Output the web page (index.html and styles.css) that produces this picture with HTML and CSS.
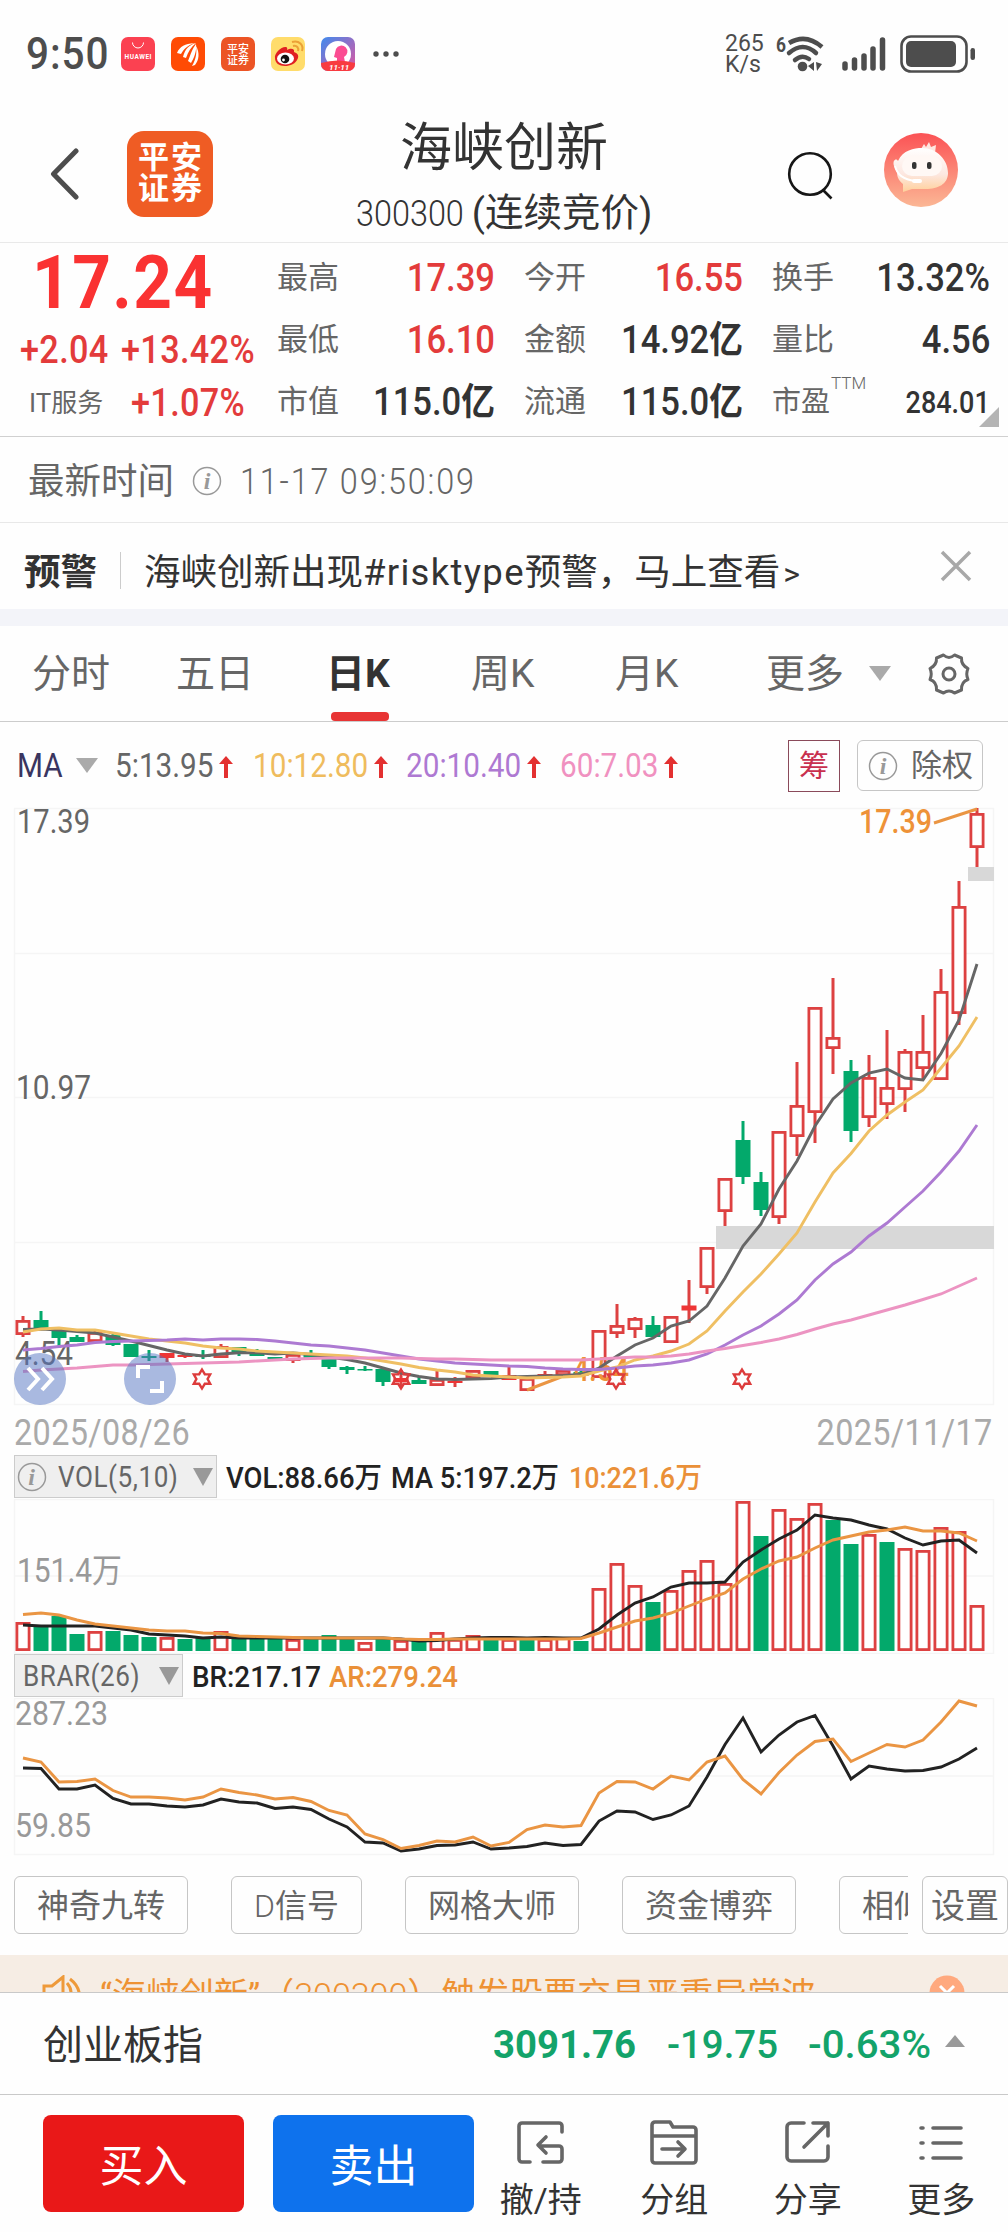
FILE: index.html
```html
<!DOCTYPE html>
<html lang="zh-CN">
<head>
  <meta charset="UTF-8">
  <meta name="viewport" content="width=device-width, initial-scale=1.0">
  <title>海峡创新 300300</title>
  <link rel="stylesheet" href="styles.css">
</head>
<body>
  <!-- 状态栏 -->
  <div class="status-bar">
    <span class="clock din">9:50</span>
    <div class="app-icons">
      <svg class="app-icon" viewBox="0 0 34 34">
        <rect width="34" height="34" rx="7" fill="#fb4151"/>
        <path d="M11.500 5.500a5.500 5.500 0 0 0 11 0" fill="none" stroke="#fff" stroke-width="1"/>
        <text x="3.500" y="22" textLength="27" font-size="6.500" font-weight="bold" fill="#fff">HUAWEI</text>
      </svg>
      <svg class="app-icon" viewBox="0 0 34 34">
        <rect width="34" height="34" rx="7" fill="#ff4b05"/>
        <path d="M6 16C9 9 14 7 23 6C16 9 13 12 10 17ZM12 20C14 12 18 8 25 6C20 10 17 15 15 21ZM17 24C20 17 21 12 25 7C26 14 23 21 20 26ZM21 29C25 22 26 16 25 9C29 16 28 23 24 28Z" fill="#fff"/>
      </svg>
      <svg class="app-icon" viewBox="0 0 34 34">
        <rect width="34" height="34" rx="7" fill="#ec5425"/>
        <text x="6" y="15.500" font-size="11" font-weight="500" fill="#fff">平安</text>
        <text x="6" y="26.500" font-size="11" font-weight="500" fill="#fff">证券</text>
      </svg>
      <svg class="app-icon" viewBox="0 0 34 34">
        <rect width="34" height="34" rx="7" fill="#ffdc6b"/>
        <path d="M4 21C3 16 11 9 15 10C17 10.500 16 13 16 13C19 11 24 11 23 15C26 16 28 18 27 21C25 27 19 29 14 29C8 29 4 26 4 21Z" fill="#e01f22"/>
        <ellipse cx="14.500" cy="21.500" rx="8.500" ry="6" fill="#fff"/>
        <circle cx="14" cy="22" r="4.300" fill="#111"/>
        <circle cx="12.500" cy="23" r="1.400" fill="#fff"/>
        <path d="M22 9c4-1 6 2 5 5M21 5c7-2 12 3 10 9" fill="none" stroke="#eba136" stroke-width="2"/>
      </svg>
      <svg class="app-icon" viewBox="0 0 34 34">
        <defs>
          <linearGradient id="shopBg" x1="0" y1="0" x2="1" y2="1">
            <stop offset="0" stop-color="#3f8bee"/><stop offset="1" stop-color="#e2559f"/>
          </linearGradient>
        </defs>
        <rect width="34" height="34" rx="7" fill="url(#shopBg)"/>
        <circle cx="17" cy="17" r="13" fill="#fff"/>
        <path d="M15 12a6 6 0 1 1 8 8l1 5h-8v-4l-3-1z" fill="#fb4c92"/>
        <path d="M0 26q17-5 34 0v1a7 7 0 0 1-7 7H7a7 7 0 0 1-7-7z" fill="#f83b40"/>
        <text x="8" y="33" font-size="8" font-weight="bold" font-style="italic" fill="#fff">11·11</text>
      </svg>
    </div>
    <svg class="dots" viewBox="0 0 28 8" fill="#4d4d4d"><circle cx="3" cy="4" r="2.700"/><circle cx="13" cy="4" r="2.700"/><circle cx="23" cy="4" r="2.700"/></svg>
    <div class="net-speed"><span>265</span><span>K/s</span></div>
    <svg class="wifi" viewBox="0 0 50 40">
      <text x="0" y="18" font-size="20" font-weight="bold" textLength="10" lengthAdjust="spacingAndGlyphs" fill="#4d4d4d">6</text>
      <g fill="none" stroke="#4d4d4d" stroke-width="4.500">
        <path d="M13 9Q30-1 46 13"/>
        <path d="M13 19Q27 7 40 19" stroke-linecap="round"/>
        <path d="M19 26Q26 20 33 25" stroke-linecap="round"/>
      </g>
      <circle cx="26.500" cy="32.500" r="4.800" fill="#4d4d4d"/>
      <path d="M38 28v9l-6-5zM40 28l6 2-5 7z" fill="#4d4d4d"/>
    </svg>
    <svg class="signal" viewBox="0 0 46 36" stroke="#4d4d4d" stroke-width="5.500" stroke-linecap="round">
      <path d="M3 28v4M12.500 24v8M22 20v12M31 13v19M40.500 4v28"/>
    </svg>
    <svg class="battery" viewBox="0 0 76 38">
      <rect x="1.500" y="1.500" width="65" height="35" rx="9.500" fill="none" stroke="#4d4d4d" stroke-width="2.600"/>
      <rect x="6" y="6" width="50" height="26" rx="5" fill="#4d4d4d"/>
      <rect x="70.500" y="13" width="4.500" height="12" rx="2.200" fill="#4d4d4d"/>
    </svg>
  </div>

  <!-- 标题栏 -->
  <div class="header">
    <div class="header-left">
      <svg class="back" viewBox="0 0 30 52"><path d="M26 3L3.500 26L26 49" fill="none" stroke="#4d4d4d" stroke-width="5" stroke-linecap="round" stroke-linejoin="round"/></svg>
      <div class="logo"><span>平安</span><span>证券</span></div>
    </div>
    <div class="title-box">
      <div class="title">海峡创新</div>
      <div class="subtitle"><span class="din code">300300</span><span>(连续竞价)</span></div>
    </div>
    <div class="header-right">
      <svg class="search" viewBox="0 0 48 50" fill="none" stroke="#161616" stroke-width="2.600"><circle cx="23" cy="23" r="20.800"/><path d="M36 39l8.500 8.500"/></svg>
      <svg class="avatar" viewBox="0 0 76 76">
        <defs>
          <linearGradient id="avBg" x1="0" y1="0" x2="0" y2="1"><stop offset="0" stop-color="#fb5255"/><stop offset="1" stop-color="#fbb795"/></linearGradient>
          <linearGradient id="avFace" x1="0" y1="0" x2="0" y2="1"><stop offset="0" stop-color="#fff"/><stop offset=".6" stop-color="#fde7e0"/><stop offset="1" stop-color="#ffd09a"/></linearGradient>
        </defs>
        <circle cx="38" cy="38" r="37" fill="url(#avBg)"/>
        <path d="M38 17l3-5 2 3 3-5 2 5 5-2-1 8z" fill="#ffe6e0"/>
        <path d="M11 34C9 27 14 26 15 29C20 18 31 16 39 16C54 16 65 28 65 41C65 52 55 57 43 57L29 57L20 60L20 52C15 48 14 44 14 40Z" fill="url(#avFace)"/>
        <rect x="19" y="24" width="40" height="20" rx="10" fill="#fff8f5"/>
        <rect x="29" y="30" width="4.500" height="7" rx="2" fill="#333"/><rect x="44" y="30" width="4.500" height="7" rx="2" fill="#333"/>
        <path d="M12 34q3 13 20 15" fill="none" stroke="#fff" stroke-width="2"/><rect x="29" y="47" width="10" height="4" rx="2" fill="#fff"/>
      </svg>
    </div>
  </div>

  <!-- 行情 -->
  <div class="quote">
    <div class="price-box">
      <div class="price din">17.24</div>
      <div class="change"><span class="din chg">+2.04</span><span class="din">+13.42%</span></div>
      <div class="industry"><span class="ind-name">IT服务</span><span class="din">+1.07%</span></div>
    </div>
    <div class="stats">
      <div class="stat"><span class="label">最高</span><span class="value red">17.39</span></div>
      <div class="stat"><span class="label">今开</span><span class="value red">16.55</span></div>
      <div class="stat"><span class="label">换手</span><span class="value">13.32%</span></div>
      <div class="stat"><span class="label">最低</span><span class="value red">16.10</span></div>
      <div class="stat"><span class="label">金额</span><span class="value">14.92<b>亿</b></span></div>
      <div class="stat"><span class="label">量比</span><span class="value">4.56</span></div>
      <div class="stat"><span class="label">市值</span><span class="value">115.0<b>亿</b></span></div>
      <div class="stat"><span class="label">流通</span><span class="value">115.0<b>亿</b></span></div>
      <div class="stat"><span class="label small">市盈<i class="ttm">TTM</i></span><span class="value small">284.01</span></div>
    </div>
    <span class="corner"></span>
  </div>

  <div class="time-row">
    <span>最新时间</span>
    <svg class="info" viewBox="0 0 30 30"><circle cx="15" cy="15" r="13.500"/><text x="15" y="23">i</text></svg>
    <span class="din time">11-17 09:50:09</span>
  </div>

  <!-- 预警 -->
  <div class="alert">
    <b>预警</b>
    <span class="alert-line"></span>
    <span class="alert-text">海峡创新出现<span class="latin">#risktype</span>预警，马上查看<span class="gt">&gt;</span></span>
    <svg class="close" viewBox="0 0 32 32"><path d="M2 2l28 28M30 2L2 30" stroke="#a8a8a8" stroke-width="3.500"/></svg>
  </div>
  <div class="band"></div>

  <!-- 周期 -->
  <div class="tabs">
    <span>分时</span>
    <span>五日</span>
    <span class="active">日K</span>
    <span>周K</span>
    <span>月K</span>
    <span>更多</span>
    <i class="tri tab-tri"></i>
    <svg class="gear" viewBox="-22 -22 44 44" fill="none" stroke="#666" stroke-width="3" stroke-linejoin="round">
      <path d="M-5.500-19Q0-14 5.500-19L12.500-16Q12-9 19-5.500Q16.500 0 19 5.500Q12 8 12.500 16L5.500 19Q0 15 -5.500 19L-12.500 16Q-12 8 -19 5.500Q-16.500 0 -19-5.500Q-12-9-12.500-16Z"/>
      <circle r="6"/>
    </svg>
  </div>

  <!-- 均线 -->
  <div class="ma-row">
    <span class="ma-name din">MA</span><i class="tri"></i>
    <span class="ma c5"><span class="din">5:13.95</span></span><svg class="up" viewBox="0 0 14 22"><path d="M7 0L14 8H9V22H5V8H0Z"/></svg>
    <span class="ma c10"><span class="din">10:12.80</span></span><svg class="up" viewBox="0 0 14 22"><path d="M7 0L14 8H9V22H5V8H0Z"/></svg>
    <span class="ma c20"><span class="din">20:10.40</span></span><svg class="up" viewBox="0 0 14 22"><path d="M7 0L14 8H9V22H5V8H0Z"/></svg>
    <span class="ma c60"><span class="din">60:7.03</span></span><svg class="up" viewBox="0 0 14 22"><path d="M7 0L14 8H9V22H5V8H0Z"/></svg>
    <span class="chip">筹</span>
    <span class="right-btn"><svg class="info" viewBox="0 0 30 30"><circle cx="15" cy="15" r="13.500"/><text x="15" y="23">i</text></svg>除权</span>
  </div>

  <!-- K线图 -->
  <svg class="chart k-chart" viewBox="0 800 1008 606">
    <g class="grid"><path d="M14 808.500H993.500V1404.500H14.500V808.500M14 953.500H993M14 1097.500H993M14 1242.500H993"/></g>
    <path d="M716 1226H994V1249H716ZM968 867H994V881H968Z" fill="#d8d8d8"/>
    <g class="axis dark">
      <text x="17" y="833" textLength="73" lengthAdjust="spacingAndGlyphs">17.39</text>
      <text x="16" y="1099" textLength="75" lengthAdjust="spacingAndGlyphs">10.97</text>
      <text x="15" y="1365" textLength="58" lengthAdjust="spacingAndGlyphs">4.54</text>
    </g>
    <g id="candles"></g>
    <g class="axis peak">
      <text x="859" y="833" textLength="73" lengthAdjust="spacingAndGlyphs">17.39</text>
      <text x="573" y="1381" textLength="56" lengthAdjust="spacingAndGlyphs">4.54</text>
      <path d="M934 823L977 809M527 1390L561 1377"/>
    </g>
    <g id="maLines"></g>
    <g id="stars"></g>
    <g fill="#5473c2" fill-opacity=".5"><circle cx="40" cy="1379" r="26"/><circle cx="150" cy="1379" r="26"/></g>
    <path d="M28 1368L38 1379L28 1390M42 1368L52 1379L42 1390M138 1378V1367H150M162 1381V1391H150" fill="none" stroke="#fff" stroke-width="4"/>
  </svg>
  <div class="dates"><span class="din">2025/08/26</span><span class="din din-r">2025/11/17</span></div>

  <!-- 成交量 -->
  <div class="ind-row">
    <span class="ind-btn vol-btn"><svg class="info" viewBox="0 0 30 30"><circle cx="15" cy="15" r="13.500"/><text x="15" y="23">i</text></svg><span class="din">VOL(5,10)</span><i class="tri"></i></span>
    <svg class="ind-text" viewBox="0 0 500 44">
      <text x="9" y="33" textLength="156" lengthAdjust="spacingAndGlyphs">VOL:88.66万</text>
      <text x="174" y="33" textLength="168" lengthAdjust="spacingAndGlyphs">MA 5:197.2万</text>
      <text x="352" y="33" textLength="133" lengthAdjust="spacingAndGlyphs" class="org">10:221.6万</text>
    </svg>
  </div>
  <svg class="chart vol-chart" viewBox="0 1499 1008 155">
    <g class="grid"><path d="M14 1499.500H993.500V1653.500H14.500V1499.500M14 1576H993"/></g>
    <g class="axis"><text x="17" y="1582" textLength="105" lengthAdjust="spacingAndGlyphs">151.4万</text></g>
    <g id="volBars"></g>
    <g id="volLines"></g>
  </svg>

  <!-- BRAR -->
  <div class="ind-row">
    <span class="ind-btn brar-btn"><span class="din">BRAR(26)</span><i class="tri"></i></span>
    <svg class="ind-text" viewBox="0 0 500 44">
      <text x="9" y="33" textLength="129" lengthAdjust="spacingAndGlyphs">BR:217.17</text>
      <text x="146" y="33" textLength="129" lengthAdjust="spacingAndGlyphs" class="org">AR:279.24</text>
    </svg>
  </div>
  <svg class="chart brar-chart" viewBox="0 1697 1008 158">
    <g class="grid"><path d="M14 1697.500H993.500V1853.500H14.500V1697.500M14 1775H993"/></g>
    <g class="axis">
      <text x="15" y="1724" textLength="93" lengthAdjust="spacingAndGlyphs">287.23</text>
      <text x="15" y="1836" textLength="76" lengthAdjust="spacingAndGlyphs">59.85</text>
    </g>
    <g id="brarLines"></g>
  </svg>

  <div class="tools">
    <div class="tool-list">
      <span class="tool">神奇九转</span>
      <span class="tool"><span class="d">D</span>信号</span>
      <span class="tool">网格大师</span>
      <span class="tool">资金博弈</span>
      <span class="tool">相似K线</span>
    </div>
    <span class="tool setting">设置</span>
  </div>

  <!-- 公告 -->
  <div class="notice">
    <svg class="speaker" viewBox="0 0 40 36" fill="none" stroke="#ee9a3a" stroke-width="3"><path d="M2 11H10L21 2V34L10 25H2ZM25 8q8 9 0 20M28 4q12 9 9 24"/></svg>
    <span class="notice-text">“海峡创新”（<span class="notice-code">300300</span>）触发股票交易严重异常波</span>
    <svg class="notice-close" viewBox="0 0 36 36"><circle cx="18" cy="18" r="17.500" fill="#ffa97e"/><path d="M11 11L25 25M25 11L11 25" stroke="#fff" stroke-width="3"/></svg>
  </div>

  <!-- 指数 -->
  <div class="index-bar">
    <span class="index-name">创业板指</span>
    <svg class="index-nums" viewBox="0 0 476 60">
      <text x="-1" y="44" class="now" textLength="143" lengthAdjust="spacingAndGlyphs">3091.76</text>
      <text x="173" y="44" textLength="111" lengthAdjust="spacingAndGlyphs">-19.75</text>
      <text x="314" y="44" textLength="123" lengthAdjust="spacingAndGlyphs">-0.63%</text>
      <path d="M451 33L461 21L471 33Z" fill="#999"/>
    </svg>
  </div>

  <div class="bottom-bar">
    <button class="buy">买入</button>
    <button class="sell">卖出</button>
    <div class="menu">
      <div class="menu-item">
        <svg viewBox="0 0 48 48"><path d="M45 12V6a3 3 0 0 0-3-3H5a3 3 0 0 0-3 3V39a3 3 0 0 0 3 3H13M26 42H42a3 3 0 0 0 3-3V29a3 3 0 0 0-3-3H23M29 17L21 25L29 33"/></svg>
        <span>撤/持</span>
      </div>
      <div class="menu-item">
        <svg viewBox="0 0 48 48"><path d="M2 16H46M2 40V5a3 3 0 0 1 3-3H20L23 7H43a3 3 0 0 1 3 3V40a3 3 0 0 1-3 3H5a3 3 0 0 1-3-3M12 29H34M28 22L35 29L28 36"/></svg>
        <span>分组</span>
      </div>
      <div class="menu-item">
        <svg viewBox="0 0 48 48"><path d="M20 3H7a4 4 0 0 0-4 4V37a4 4 0 0 0 4 4H40a4 4 0 0 0 4-4V26M29 3H44V16M44 3L20 27"/></svg>
        <span>分享</span>
      </div>
      <div class="menu-item">
        <svg viewBox="0 0 48 48"><path d="M4 8h2M16 8H44M4 23h2M16 23H44M4 38h2M16 38H44"/></svg>
        <span>更多</span>
      </div>
    </div>
  </div>

  <script src="chart.js"></script>
</body>
</html>
```
FILE: styles.css
```css
* {
    box-sizing: border-box;
}
body {
    margin: 0;
    width: 1008px;
    height: 2232px;
    overflow: hidden;
    background: #fefefe;
    color: #333;
    font-family: Roboto, "Noto Sans CJK SC", sans-serif;
    text-spacing-trim: space-all; /* 全角标点不压缩 */
}
svg {
    display: block;
    flex-shrink: 0;
}
/* 数字压窄一点 */
.din {
    display: inline-block;
    transform: scaleX(0.9);
    transform-origin: left center;
    white-space: nowrap;
}
.din-r {
    transform-origin: right center;
}
.red {
    color: #e33b3b;
}

/* 状态栏 */
.status-bar {
    display: flex;
    align-items: center;
    height: 108px;
    padding-left: 26px;
}
.clock {
    width: 95px;
    font-size: 45px;
    font-weight: 500;
    line-height: 50px;
    color: #4d4d4d;
    letter-spacing: 1px;
}
.app-icons {
    display: flex;
    gap: 16px;
}
.app-icon {
    width: 34px;
    height: 34px;
}
.dots {
    width: 28px;
    margin-left: 18px;
}
.net-speed {
    display: flex;
    flex-direction: column;
    width: 45px;
    margin-left: 324px;
    font-size: 23px;
    line-height: 21px;
    color: #4d4d4d;
}
.wifi {
    width: 50px;
    margin-left: 6px;
}
.signal {
    width: 46px;
    margin-left: 16px;
}
.battery {
    width: 76px;
    margin-left: 12px;
}

/* 标题栏 */
.header {
    display: grid;
    grid-template-columns: 250px 1fr 250px;
    height: 135px;
    border-bottom: 1px solid #e9e9e9;
}
.header-left {
    display: flex;
    padding: 23px 0 0 50px;
}
.back {
    width: 30px;
    height: 52px;
    margin-top: 17px;
}
.logo {
    display: flex;
    flex-direction: column;
    align-items: center;
    justify-content: center;
    width: 86px;
    height: 86px;
    margin-left: 47px;
    border-radius: 17px;
    background: #ef5c24;
    color: #fff;
    font-size: 31px;
    font-weight: 700;
    line-height: 31px;
    letter-spacing: 2px;
    padding: 0 0 3px 2px;
}
.title-box {
    text-align: center;
}
.title {
    margin-top: 11px;
    font-size: 52px;
    line-height: 60px;
}
.subtitle {
    display: flex;
    justify-content: center;
    margin-top: 12px;
    font-size: 38.5px;
    line-height: 44px;
}
.code {
    width: 116px;
    font-size: 36px;
    font-weight: 300;
    padding-top: 1px;
}
.header-right {
    display: flex;
    padding: 24px 0 0 29px;
}
.search {
    width: 48px;
    height: 50px;
    margin-top: 19px;
}
.avatar {
    width: 76px;
    height: 76px;
    margin-left: 48px;
}

/* 行情 */
.quote {
    position: relative;
    display: flex;
    height: 194px;
    border-bottom: 1px solid #d0d0d0;
}
.price-box {
    width: 277px;
    color: #e33b3b;
    font-size: 38px;
    font-weight: 500;
    letter-spacing: 0.4px;
}
.price {
    margin: 1px 0 0 32px;
    color: #fa3232;
    font-size: 75px;
    font-weight: 700;
    line-height: 76px;
    letter-spacing: 1.6px;
}
.change {
    display: flex;
    padding-left: 20px;
    margin-top: 4px;
    line-height: 52px;
}
.chg {
    width: 101px;
}
.industry {
    display: flex;
    padding-left: 29px;
    line-height: 54px;
}
.ind-name {
    width: 102px;
    color: #666;
    font-size: 26px;
    font-weight: 400;
    letter-spacing: 0;
}
.stats {
    display: grid;
    grid-template-columns: 218px 219px 218px;
    grid-template-rows: repeat(3, 62px);
    column-gap: 29px;
    height: 186px;
    padding-top: 4px;
}
.stat {
    display: flex;
    justify-content: space-between;
    line-height: 62px;
}
.label {
    position: relative;
    color: #666;
    font-size: 31px;
}
.label.small {
    font-size: 29px;
}
.ttm {
    position: absolute;
    top: -19px;
    left: 59px;
    font-size: 17px;
    font-style: normal;
    font-weight: 300;
}
.value {
    font-size: 38px;
    font-weight: 500;
    transform: scaleX(0.91);
    transform-origin: right center;
    white-space: nowrap;
}
.value b {
    font-size: 37px;
    font-weight: 700;
}
.value.small {
    font-size: 31px;
    padding-top: 1px;
    transform: scaleX(0.87);
}
.corner {
    position: absolute;
    right: 9px;
    bottom: 9px;
    border-left: 20px solid transparent;
    border-bottom: 20px solid #b4b4b4;
}

.time-row {
    display: flex;
    align-items: center;
    height: 86px;
    padding-left: 28px;
    padding-top: 2px;
    border-bottom: 1px solid #e8e8e8;
    color: #666;
    font-size: 36.5px;
    line-height: 50px;
}
.time-row > span {
    padding-top: 2px;
}
.info {
    width: 30px;
    height: 30px;
}
.info circle {
    fill: none;
    stroke: #999;
    stroke-width: 1.5;
}
.info text {
    fill: #999;
    font: italic bold 24px "Liberation Serif", serif;
    text-anchor: middle;
}
.time-row .info {
    margin: 0 18px 0 18px;
}
.time {
    font-size: 36px;
    font-weight: 300;
    letter-spacing: 2px;
}

/* 预警 */
.alert {
    display: flex;
    align-items: center;
    height: 86px;
    padding-left: 24px;
    padding-top: 14px;
    font-size: 36.5px;
    line-height: 50px;
}
.alert-line {
    width: 1px;
    height: 37px;
    margin: -6px 23px 0 23px;
    background: #ccc;
}
.alert-text {
    width: 796px;
    white-space: nowrap;
}
.latin {
    letter-spacing: 1.3px;
}
.gt {
    margin-left: 3px;
    font-size: 32px;
}
.close {
    width: 32px;
    margin-top: -14px;
}
.band {
    height: 17px;
    background: #f3f4f9;
}

/* 周期 */
.tabs {
    display: flex;
    align-items: center;
    height: 96px;
    padding-left: 32px;
    border-bottom: 1px solid #ccc;
    color: #666;
    font-size: 39px;
    line-height: 94px;
}
.tabs span {
    width: 144px;
    padding-top: 1px;
    white-space: nowrap;
}
.tabs .active {
    position: relative;
    color: #333;
    font-weight: 700;
}
.tabs span:nth-child(3) {
    padding-left: 6px;
}
.tabs span:nth-child(4) {
    padding-left: 7px;
}
.tabs span:nth-child(5) {
    padding-left: 7px;
}
.tabs span:nth-child(6) {
    padding-left: 14px;
    width: 117px;
}
.tabs .active::after {
    content: "";
    position: absolute;
    left: 11px;
    bottom: 0;
    width: 58px;
    height: 9px;
    border-radius: 4px;
    background: #e83434;
}
.tri {
    border: 11px solid transparent;
    border-top: 15px solid #aaa;
    border-bottom: 0;
}
.gear {
    width: 44px;
    margin-left: 36px;
}

/* 均线 */
.ma-row {
    display: flex;
    align-items: center;
    height: 78px;
    padding: 9px 0 0 17px;
    font-size: 33px;
    line-height: 46px;
}
.ma-name {
    width: 59px;
    color: #3a3560;
}
.ma {
    display: block;
    height: 46px;
    white-space: nowrap;
}
.c5 { width: 104px; margin-left: 17px; color: #666; }
.c10 { width: 121px; margin-left: 20px; color: #efbc5d; }
.c20 { width: 121px; margin-left: 18px; color: #ae79d2; }
.c60 { width: 104px; margin-left: 19px; color: #f091c0; }
.up {
    width: 14px;
    height: 22px;
    margin-top: 2px;
}
.up path {
    fill: #e33030;
}
.chip {
    width: 52px;
    height: 52px;
    margin-left: 110px;
    border: 1.5px solid #8a4a5a;
    color: #c8304e;
    font-size: 30px;
    line-height: 50px;
    text-align: center;
}
.right-btn {
    display: flex;
    align-items: center;
    width: 126px;
    height: 51px;
    margin-left: 17px;
    padding-left: 10px;
    border: 1px solid #c6c6c6;
    border-radius: 6px;
    color: #666;
    font-size: 31px;
    white-space: nowrap;
}
.right-btn .info {
    margin-right: 13px;
}

/* 图表 */
.chart {
    width: 1008px;
}
.k-chart { height: 606px; }
.vol-chart { height: 155px; }
.brar-chart { height: 158px; }
.grid path {
    fill: none;
    stroke: #f5f5f5;
    stroke-width: 1.5;
}
.axis text {
    font-size: 33px;
    fill: #999;
}
.dark text {
    fill: #666;
}
.peak text {
    fill: #ee9238;
    font-weight: 500;
}
.peak path {
    stroke: #ea9543;
    stroke-width: 3;
}
.dates {
    display: flex;
    justify-content: space-between;
    height: 49px;
    padding: 4px 15px 0 14px;
    color: #aaa;
    font-size: 36px;
    line-height: 46px;
    letter-spacing: 0.4px;
}
.ind-row {
    display: flex;
    height: 44px;
    padding-left: 14px;
}
.ind-btn {
    display: flex;
    align-items: center;
    height: 43px;
    border: 1px solid #ccc;
    background: #efefef;
    color: #666;
    font-size: 29px;
    letter-spacing: 0.6px;
}
.ind-btn .tri {
    border-width: 18px 10px 0;
    border-top-color: #999;
    margin-left: auto;
    margin-right: 3px;
}
.vol-btn {
    width: 203px;
    padding-left: 2px;
}
.vol-btn .din {
    width: 120px;
    margin-left: 11px;
}
.brar-btn {
    width: 169px;
    padding-left: 8px;
}
.ind-text {
    width: 500px;
    height: 44px;
}
.ind-text text {
    fill: #222;
    font-size: 29px;
    font-weight: 500;
}
.ind-text .org {
    fill: #ea9038;
}

.tools {
    display: flex;
    height: 99px;
    padding: 20px 0 0 14px;
}
.tool-list {
    display: flex;
    gap: 43px;
    width: 894px;
    overflow: hidden;
}
.tool {
    flex-shrink: 0;
    height: 58px;
    padding: 0 22px;
    border: 1px solid #c6c6c6;
    border-radius: 6px;
    color: #666;
    font-size: 32px;
    line-height: 58px;
    white-space: nowrap;
}
.d {
    font-weight: 300;
}
.setting {
    width: 86px;
    margin-left: 14px;
    padding: 0;
    font-size: 34px;
    text-align: center;
}

/* 公告 */
.notice {
    display: flex;
    align-items: flex-start;
    height: 37px;
    padding: 20px 0 0 42px;
    overflow: hidden;
    background: #f6ede4;
    color: #ee9233;
}
.speaker {
    width: 40px;
}
.notice-text {
    width: 847px;
    padding-left: 18px;
    font-size: 34px;
    line-height: 41px;
    white-space: nowrap;
}
.notice-code {
    font-weight: 300;
}
.notice-close {
    width: 36px;
}

/* 指数 */
.index-bar {
    display: flex;
    align-items: center;
    height: 103px;
    padding-left: 43px;
    border-top: 1px solid #c9c9c9;
    border-bottom: 1px solid #c9c9c9;
}
.index-name {
    width: 451px;
    padding-bottom: 4px;
    font-size: 40px;
}
.index-nums {
    width: 476px;
    height: 60px;
}
.index-nums text {
    fill: #13a36a;
    font-size: 39px;
    font-weight: 500;
}
.index-nums .now {
    font-weight: 700;
}

/* 底部 */
.bottom-bar {
    display: flex;
    height: 138px;
    padding: 20px 0 0 43px;
}
.buy,
.sell {
    width: 201px;
    height: 97px;
    padding: 0 0 2px;
    border: none;
    border-radius: 8px;
    background: #e91818;
    color: #fff;
    font-family: inherit;
    font-size: 44px;
}
.sell {
    margin-left: 29px;
    background: #0e72ed;
}
.menu {
    display: flex;
    flex: 1;
}
.menu-item {
    display: flex;
    flex-direction: column;
    align-items: center;
    flex: 1;
    font-size: 34px;
    line-height: 46px;
    white-space: nowrap;
}
.menu-item svg {
    width: 48px;
    height: 48px;
    margin: 5px 0 9px;
    fill: none;
    stroke: #666;
    stroke-width: 3.6;
    stroke-linecap: round;
    stroke-linejoin: round;
}
```
FILE: chart.js
```js
// 一根K线18px，第一根在x=23
const RED = "#dd4141";
const GREEN = "#03a96b";
const px = (i) => 23 + i * 18;

function draw(parentId, tag, attrs) {
  const el = document.createElementNS("http://www.w3.org/2000/svg", tag);
  for (const key in attrs) el.setAttribute(key, attrs[key]);
  document.getElementById(parentId).appendChild(el);
}

function line(parentId, color, ys) {
  const points = ys.map((y, i) => px(i) + "," + y).join(" ");
  draw(parentId, "polyline", { points, fill: "none", stroke: color, "stroke-width": 2.9 });
}

function bar(parentId, i, top, bottom, up) {
  if (up && bottom - top > 5) {
    draw(parentId, "rect", { x: px(i) - 6.1, y: top + 1.4, width: 12.2, height: bottom - top - 2.8, fill: "#fff", stroke: RED, "stroke-width": 2.8 });
  } else {
    draw(parentId, "rect", { x: px(i) - 7.5, y: top, width: 15, height: Math.max(bottom - top, 1.5), fill: up ? "#ee3535" : GREEN });
  }
}

// [最高, 实体上, 实体下, 最低, 涨1 跌0]
const candles = [
  [1316,1320,1335,1337,1],[1311,1320,1328,1328,0],[1327,1330,1338,1348,0],[1335,1337,1342,1342,0],[1331,1332,1342,1342,1],
  [1332,1335,1345,1346,0],[1344,1344,1357,1357,0],[1350,1356,1358,1361,0],[1353,1353,1358,1362,1],[1353,1355,1357,1358,1],
  [1350,1355,1357,1359,0],[1344,1346,1358,1358,1],[1347,1347,1352,1356,0],[1349,1352,1356,1356,0],[1357,1357,1359,1359,0],
  [1354,1354,1361,1363,1],[1350,1354,1358,1358,0],[1359,1359,1367,1369,0],[1366,1367,1370,1374,0],[1366,1369,1370,1371,0],
  [1369,1369,1382,1386,0],[1370,1378,1382,1386,1],[1376,1380,1384,1384,0],[1371,1379,1386,1386,1],[1377,1381,1383,1387,1],
  [1370,1370,1378,1378,1],[1371,1371,1376,1376,0],[1367,1375,1380,1380,1],[1377,1378,1391,1391,1],[1371,1374,1377,1377,1],
  [1370,1370,1376,1376,1],[1371,1372,1376,1376,0],[1330,1330,1378,1378,1],[1304,1325,1334,1338,1],[1317,1318,1330,1338,1],
  [1316,1325,1337,1337,0],[1316,1316,1343,1343,1],[1280,1305.5,1310.5,1323,1],[1247,1247,1288,1294,1],[1178,1178,1212,1226,1],
  [1121,1140,1177,1184,0],[1172,1182,1210,1216,0],[1131,1131,1218,1224,1],[1062,1105,1137,1156,1],[1007,1007,1113,1143,1],
  [978,1037,1049,1074,1],[1060,1071,1131,1142,0],[1055,1077,1118,1127,1],[1030,1087,1105,1119,1],[1049,1051,1090,1112,1],
  [1015,1051,1069,1080,1],[969,991,1080,1080,1],[881,906,1014,1025,1],[808,813,848,867,1]
];
candles.forEach(([high, top, bottom, low, up], i) => {
  draw("candles", "line", { x1: px(i), x2: px(i), y1: high, y2: low, stroke: up ? RED : GREEN, "stroke-width": 3 });
  bar("candles", i, top, bottom, up);
});

// MA5 / MA10 / MA20 / MA60
line("maLines", "#666", [1329.5,1329,1330,1331.5,1333,1337,1341,1345.5,1350,1354,1356,1354,1352.7,1352.7,1354,1353,1354.5,1357,1359.5,1363,1368,1373,1376.5,1379,1379.5,1379,1378.5,1377,1376.5,1376,1375.5,1374.5,1368,1356,1345,1338,1326,1321,1306,1278,1246,1224,1189,1161,1126,1099,1083,1073,1069,1078,1080,1053.5,1020,964]);
line("maLines", "#efbf63", [1332,1329,1328,1330,1330,1333,1336,1339,1341,1343,1346,1348,1349,1351,1352,1353,1354,1355,1356,1358,1361,1364,1367.5,1370,1372,1375,1376,1377,1378,1377.5,1377,1376,1371,1367,1360,1356,1351,1344,1331,1311,1292,1274,1254,1233,1202,1173,1153.5,1131,1115,1102,1090,1068,1046,1017]);
line("maLines", "#ad7ad2", [1350,1348.5,1346.5,1345,1342.5,1341.5,1341,1340.5,1340,1339,1340,1339,1339,1339.5,1341,1343,1345,1346,1348,1350,1353,1356,1359,1361,1363,1364,1365,1366,1366.5,1368,1369,1369.5,1369.5,1368,1366,1365,1363,1360,1354,1345,1335,1326,1314,1300,1280,1264,1252,1236,1223,1207,1191,1172,1151,1125]);
line("maLines", "#ec94c2", [1371.5,1370,1369,1368,1366.5,1365,1365,1364.5,1364,1363.5,1363,1362.5,1362,1361,1360,1359,1358.5,1358,1358,1358,1358,1358,1358.5,1359,1359,1359.5,1360,1360,1360,1360,1360,1360,1359,1358,1357,1357,1356,1354,1351,1348.5,1345.5,1342.5,1339,1334.5,1329,1324,1320,1315,1310,1305,1299.5,1294,1286,1278]);

// 事件标记
[202, 401, 616, 742].forEach((x) => {
  let d = "";
  for (let k = 0; k < 12; k++) {
    const r = k % 2 ? 5.6 : 9.5;
    const a = (k * Math.PI) / 6 - Math.PI / 2;
    d += (k ? "L" : "M") + (x + r * Math.cos(a)).toFixed(1) + " " + (1379 + r * Math.sin(a)).toFixed(1);
  }
  draw("stars", "path", { d: d + "Z", fill: "none", stroke: "#dd3c3c", "stroke-width": 2.4 });
});

const volumes = [1622,1626,1616,1634,1631,1631,1635,1637,1637,1639,1638,1631,1638,1638,1639,1639,1638,1635,1639,1642,1638,1640,1641,1632,1639,1635,1640,1639,1640,1639,1637,1641,1588,1563,1585,1602,1590,1570,1560,1583,1501,1536,1509,1518,1503,1520,1544,1534,1542,1548,1550,1527,1531,1605];
// 成交量的阳线
const volUp = [0,4,8,11,15,19,21,23,24,25,27,29,30,32,33,34,36,37,38,39,40,42,43,44,47,49,50,51,52,53];
volumes.forEach((y, i) => bar("volBars", i, y, 1651, volUp.includes(i)));
line("volLines", "#222", [1625,1626,1626,1626,1626,1628,1630,1634,1635,1636,1638,1637,1638,1638,1638,1638,1638,1638,1638,1638,1638,1639,1641,1640.5,1639,1638,1637.5,1637.5,1638,1637.5,1638,1638,1629,1615,1603,1597,1587,1583,1583,1582,1562,1550,1539,1530,1515,1518,1520,1525,1529,1538,1545,1541,1540,1553]);
line("volLines", "#ea9543", [1614.5,1613,1615,1620,1624,1626,1628,1630,1631,1631,1633,1633.5,1636,1636.5,1637,1637.5,1638,1638,1638,1638,1638,1639,1639.5,1639.5,1639,1639,1639,1639,1639,1639,1639,1638.5,1633,1627,1621,1618,1613,1606,1599,1593,1579,1569,1561,1557,1548,1540,1536,1532,1530,1527,1531,1531,1533,1541]);

line("brarLines", "#222", [1767,1767.5,1788,1788,1784,1797.5,1803,1803,1805,1806,1804,1798,1801,1802,1807.5,1806,1808.5,1818,1826,1841,1842,1850,1848,1844.5,1844,1841,1848,1847,1845.5,1842,1844.5,1843.5,1820,1810,1811,1818.5,1814,1805,1776,1743.5,1717,1751,1734,1721,1714.5,1745,1778,1765,1768,1770,1769.5,1766,1758,1747]);
line("brarLines", "#ea9543", [1757,1761,1781,1780.5,1778,1789.5,1796,1796,1797,1799,1796,1788,1791.5,1794,1798,1796.5,1800.5,1809.5,1814,1833,1838.5,1847.5,1844.5,1840,1841,1836,1845,1841.5,1828.5,1824,1826,1824.5,1792,1780.5,1781,1788,1775,1779,1761,1755,1778.5,1793,1771.5,1754,1740.5,1738,1760.5,1752,1743.5,1746,1739,1721,1700,1705]);
```
